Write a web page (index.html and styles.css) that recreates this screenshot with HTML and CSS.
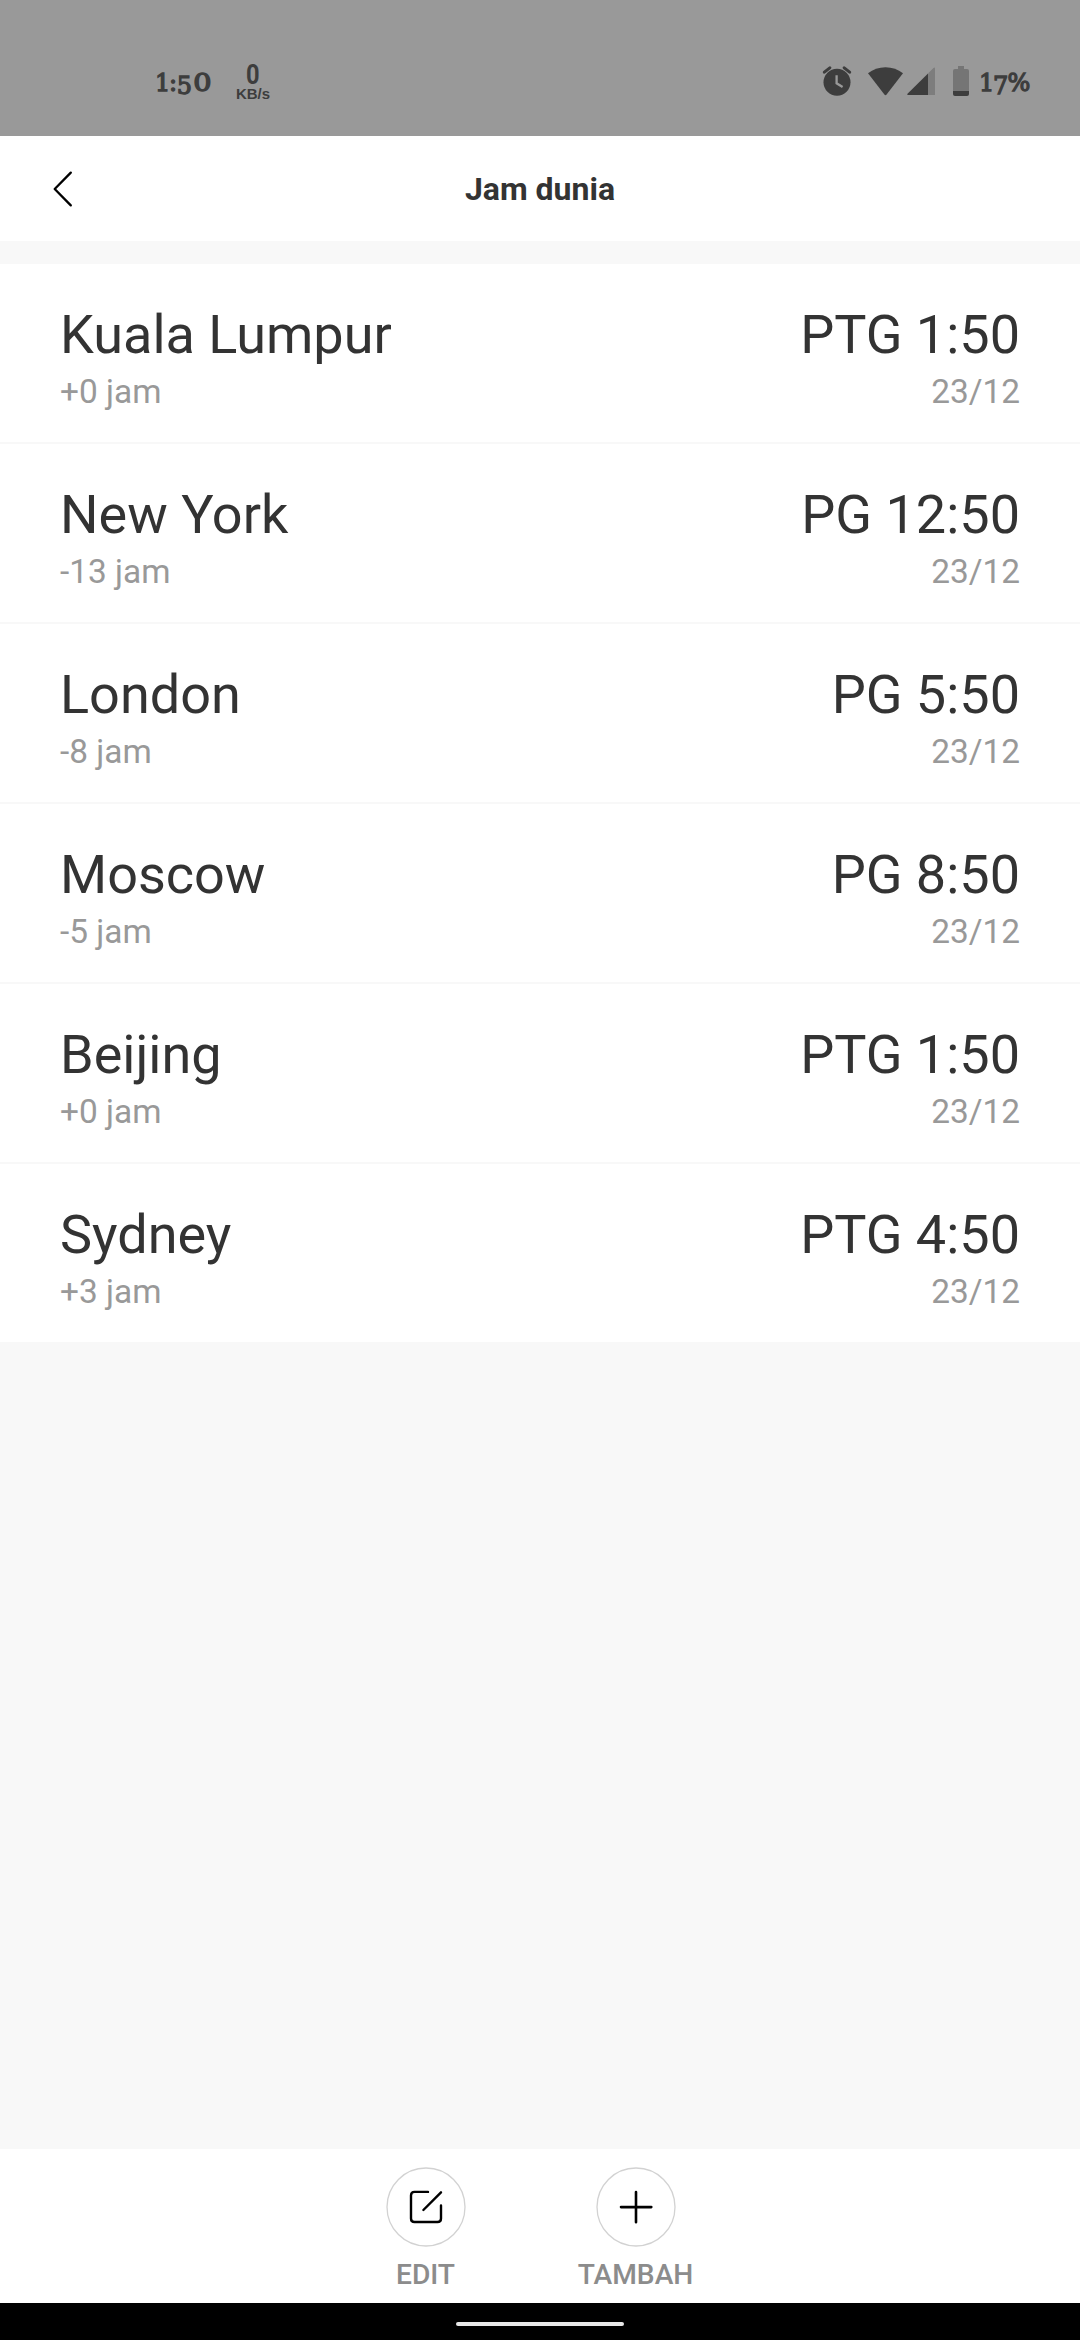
FILE: index.html
```html
<!DOCTYPE html>
<html lang="ms">
<head>
<meta charset="utf-8">
<title>Jam dunia</title>
<link rel="stylesheet" href="styles.css">
</head>
<body>
<div class="screen">
  <div class="status">
    <div class="clock"><span class="d-one">1</span><span class="d-colon">:</span><span class="d-low d-five">5</span><span class="d-wide">0</span></div>
    <div class="speed"><span class="speed-value">0</span><span class="speed-unit">KB/s</span></div>
    <div class="indicators">
      <svg class="alarm" width="30" height="31" viewBox="821 66 30 31">
        <circle cx="836" cy="82.3" r="13.5" fill="#3d3d3d"/>
        <path d="M823.4 72.2l5.4-4.4M848.6 72.2l-5.4-4.4" stroke="#3d3d3d" stroke-width="3" stroke-linecap="round"/>
        <path d="M835.6 75.3v8l6 3.7" fill="none" stroke="#999" stroke-width="2.3"/>
      </svg>
      <svg class="wifi" width="35" height="29" viewBox="867 67 35 29">
        <path d="M867 73.2Q874.500 67.200 884.500 67.200T902 73.200L885.600 94.500Q884.500 95.800 883.400 94.500Z" fill="#3d3d3d"/>
      </svg>
      <svg class="signal" width="28" height="29" viewBox="906 67 28 29">
        <path d="M927 73.500L932.400 68Q934 66.800 934 68.500V95H927Z" fill="#7d7d7d"/>
        <path d="M927 73.500V95H907.200Q905.500 95 906.500 93.800Z" fill="#3d3d3d"/>
      </svg>
      <svg class="battery" width="16" height="31" viewBox="952 66 16 31">
        <path d="M957 66h6v3h3q2 0 2 2v20h-16v-20q0-2 2-2h3z" fill="#757575"/>
        <path d="M952 91h16v3q0 2-2 2h-12q-2 0-2-2z" fill="#3d3d3d"/>
      </svg>
      <div class="percent"><span class="d-one">1</span><span class="d-low d-seven">7</span><span class="d-percent">%</span></div>
    </div>
  </div>

  <header class="header">
    <svg class="back" width="24" height="40" viewBox="0 0 24 40">
      <path d="M19.800 3.600L3.700 20L19.800 36.400" fill="none" stroke="#000" stroke-width="2.300" stroke-linecap="round" stroke-linejoin="round"/>
    </svg>
    <h1 class="title">Jam dunia</h1>
  </header>

  <main class="list">
    <div class="row"><div class="line"><span>Kuala Lumpur</span><span>PTG 1:50</span></div><div class="sub"><span>+0 jam</span><span class="date">23/12</span></div></div>
    <div class="row"><div class="line"><span>New York</span><span>PG 12:50</span></div><div class="sub"><span>-13 jam</span><span class="date">23/12</span></div></div>
    <div class="row"><div class="line"><span>London</span><span>PG 5:50</span></div><div class="sub"><span>-8 jam</span><span class="date">23/12</span></div></div>
    <div class="row"><div class="line"><span>Moscow</span><span>PG 8:50</span></div><div class="sub"><span>-5 jam</span><span class="date">23/12</span></div></div>
    <div class="row"><div class="line"><span>Beijing</span><span>PTG 1:50</span></div><div class="sub"><span>+0 jam</span><span class="date">23/12</span></div></div>
    <div class="row"><div class="line"><span>Sydney</span><span>PTG 4:50</span></div><div class="sub"><span>+3 jam</span><span class="date">23/12</span></div></div>
  </main>

  <footer class="actions">
    <div class="action">
      <svg width="80" height="80" viewBox="0 0 80 80" fill="none">
        <circle cx="40" cy="40" r="39" stroke="#d2d2d2" stroke-width="1.300"/>
        <g stroke="#000" stroke-width="2.400" stroke-linecap="round" stroke-linejoin="round">
          <path d="M42 24.900H28.500Q25 24.900 25 28.400V51.500Q25 55 28.500 55H51.500Q55 55 55 51.500V38.500"/>
          <path d="M55 25.300L37.400 43"/>
        </g>
      </svg>
      <span class="label">EDIT</span>
    </div>
    <div class="action">
      <svg width="80" height="80" viewBox="0 0 80 80" fill="none">
        <circle cx="40" cy="40" r="39" stroke="#d2d2d2" stroke-width="1.300"/>
        <path d="M40 25V55.300M25 40.100H55.300" stroke="#000" stroke-width="2.600" stroke-linecap="round"/>
      </svg>
      <span class="label">TAMBAH</span>
    </div>
  </footer>

  <div class="navbar"><div class="handle"></div></div>
</div>
</body>
</html>
```
FILE: styles.css
```css
* { box-sizing: border-box; }
body { margin: 0; font-family: Roboto, sans-serif; color: #333; }
.screen { width: 1080px; height: 2340px; display: flex; flex-direction: column; background: #f8f8f8; }

.status { height: 136px; flex: none; display: flex; padding: 62px 49px 0 155px; background: #999; color: #3d3d3d; }
.clock, .percent { display: flex; height: 42px; font: 24px/42px "DejaVu Serif", serif; -webkit-text-stroke: 1.3px #3d3d3d; }
.clock { width: 58px; }
.clock span, .percent span { display: block; text-align: center; }
.d-one { width: 14px; }
.d-colon { width: 7px; }
.d-low { transform: translateY(3px); }
.d-five { width: 17px; }
.d-wide { width: 19px; transform: scaleX(1.2); }
.d-seven { width: 14px; }
.d-percent { width: 24px; }
.speed { width: 40px; margin-left: 20px; display: flex; flex-direction: column; align-items: center; }
.speed-value { font-size: 27.5px; font-weight: 700; line-height: 25px; transform: scaleX(0.86); }
.speed-unit { font: bold 15px/13px "Liberation Sans", sans-serif; }
.indicators { margin-left: auto; display: flex; align-items: flex-start; }
.indicators svg { flex: none; margin-top: 4px; }
.indicators .wifi, .indicators .signal { margin-top: 5px; }
.indicators .alarm { margin-right: 16px; }
.indicators .wifi { margin-right: 4px; }
.indicators .signal { margin-right: 18px; }
.indicators .battery { margin-right: 10px; }

.header { height: 105px; flex: none; display: grid; grid-template-columns: 100px 1fr 100px; align-items: center; background: #fff; }
.back { margin-left: 51px; }
.title { grid-column: 2; margin: 0; font-size: 32px; line-height: 40px; font-weight: 700; text-align: center; }

.list { margin-top: 23px; flex: none; }
.row { height: 180px; padding: 39px 60px 0; background: #fff; border-bottom: 2px solid #f8f8f8; }
.line, .sub { display: flex; justify-content: space-between; }
.line { font-size: 54px; line-height: 64px; }
.sub { font-size: 33.4px; line-height: 40px; margin-top: 5px; color: #999; }

.actions { height: 154px; flex: none; margin-top: auto; padding: 18px 19px 0 0; display: flex; justify-content: center; gap: 10px; background: #fff; }
.action { width: 200px; display: flex; flex-direction: column; align-items: center; }
.label { margin-top: 10px; font-size: 28.2px; line-height: 36px; font-weight: 500; color: #8c8c8c; }

.navbar { height: 37px; flex: none; background: #000; padding-top: 19px; }
.handle { width: 168px; height: 4px; margin: 0 auto; border-radius: 2px; background: #e8e8e8; }
```
